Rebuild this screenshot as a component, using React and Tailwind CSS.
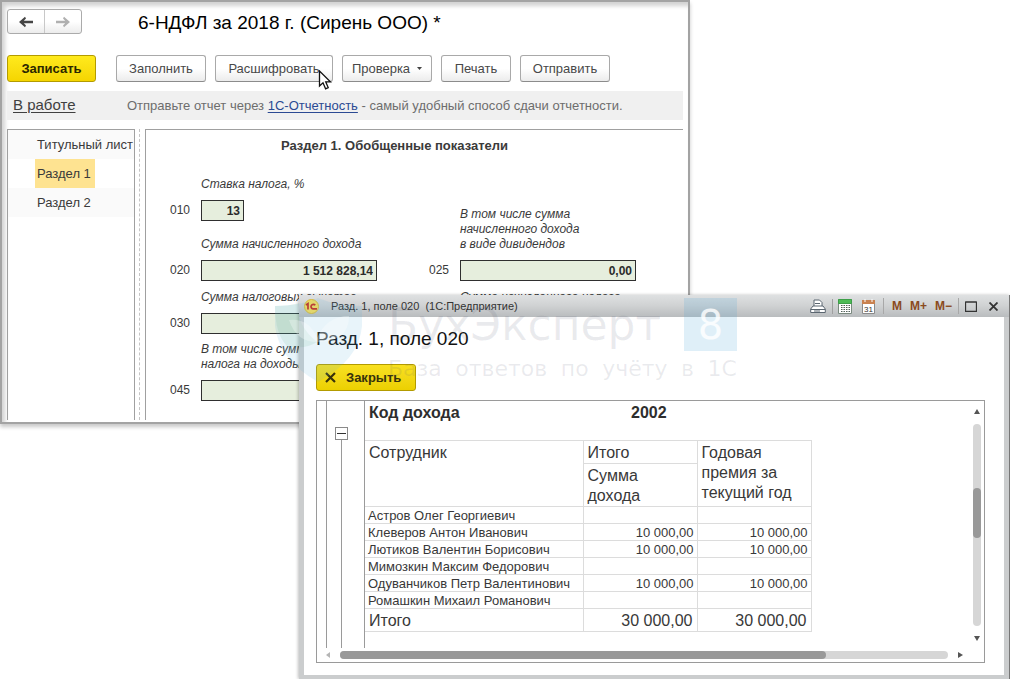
import React from "react";

const toolbarButton =
  "flex h-[27px] items-center justify-center rounded-[3px] border border-[#a9a9a9] border-b-[#8c8c8c] bg-linear-to-b from-white from-50% to-[#ececec] text-[13px] text-[#484848]";

function Field({ code, label, value, spacing, width = "w-44" }) {
  const id = "field-" + code;
  return (
    <div className={"grid grid-cols-[31px_176px] gap-y-2 " + spacing}>
      <label htmlFor={id} className="col-start-2 text-[12px] leading-[15px] text-[#3a3a3a] italic whitespace-pre">
        {label}
      </label>
      <span className="col-start-1 text-[12px] leading-[21px]">{code}</span>
      <input
        id={id}
        defaultValue={value}
        className={"h-[21px] border border-[#2f2f2f] bg-[#e6eedd] pr-[3px] text-right text-[12px] font-bold text-[#2b2b2b] outline-none " + width}
      />
    </div>
  );
}

function ReportWindow() {
  return (
    <section className="mr-80 border-2 border-[#a3a3a3] bg-white pb-0.5 pl-[5px] shadow-[0_3px_4px_rgba(0,0,0,0.22),inset_3px_4px_4px_rgba(0,0,0,0.18)]">
      <header className="flex items-center pt-[7px]">
        <div className="flex h-[25px] w-[75px] rounded-[3px] border border-[#ababab] bg-linear-to-b from-white from-50% to-[#ececec]">
          <button aria-label="Назад" className="flex flex-1 items-center justify-center border-r border-[#c8c8c8]">
            <svg width="14" height="12" viewBox="0 0 14 12" fill="#454545">
              <path d="M0 6L6 .8L7 2.6L4.8 4.8H14V7.2H4.8L7 9.4L6 11.2Z" />
            </svg>
          </button>
          <button aria-label="Вперед" className="flex flex-1 items-center justify-center">
            <svg width="14" height="12" viewBox="0 0 14 12" fill="#b0b0b0">
              <path d="M14 6L8 .8L7 2.6L9.2 4.8H0V7.2H9.2L7 9.4L8 11.2Z" />
            </svg>
          </button>
        </div>
        <h1 className="ml-14 pt-0.5 text-[19px] leading-[23px] text-black">6-НДФЛ за 2018 г. (Сирень ООО) *</h1>
      </header>

      <div className="mt-[21px] flex">
        <button className="mr-5 flex h-[27px] w-[89px] items-center justify-center rounded-[3px] border border-[#b39b00] bg-linear-to-b from-[#ffea1c] to-[#f5d500] text-[13px] font-bold text-[#2b2600]">
          Записать
        </button>
        <div className="flex gap-[9px]">
          <button className={toolbarButton + " w-[90px]"}>Заполнить</button>
          <button className={toolbarButton + " relative w-[118px]"}>
            Расшифровать
            <svg className="absolute top-[14px] right-0" width="14" height="21" viewBox="0 0 14 21">
              <path d="M1.5 1V16L5 12.8L7.6 18.8L10.2 17.6L7.7 11.8H12.4Z" fill="#fff" stroke="#111" strokeWidth="1.3" />
            </svg>
          </button>
          <button className={toolbarButton + " w-[90px] gap-[7px]"}>
            Проверка
            <svg width="5" height="3" viewBox="0 0 5 3" fill="#444">
              <path d="M0 0H5L2.5 3Z" />
            </svg>
          </button>
          <button className={toolbarButton + " w-[70px]"}>Печать</button>
          <button className={toolbarButton + " w-[90px]"}>Отправить</button>
        </div>
      </div>

      <div className="mt-[9px] mr-[5px] flex h-[29px] items-center bg-[#f0f0f0] pl-1.5">
        <a href="#status" className="w-[114px] text-[15px] text-[#404040] underline underline-offset-2">
          В работе
        </a>
        <p className="text-[13px] text-[#6d6d6d]">
          Отправьте отчет через{" "}
          <a href="#reporting" className="text-[#2b4a93] underline underline-offset-2">
            1С-Отчетность
          </a>{" "}
          - самый удобный способ сдачи отчетности.
        </p>
      </div>

      <div className="mt-[9px] mr-[5px] flex">
        <nav className="w-32 border border-b-0 border-[#a0a0a0] text-[13px] leading-[29px] text-[#3a3a3a]">
          <a href="#title" className="block bg-[#fafafa] pl-[29px] whitespace-nowrap">Титульный лист</a>
          <a href="#s1" className="block pl-[27px]">
            <span className="block w-[60px] bg-[#fee391] pl-0.5">Раздел 1</span>
          </a>
          <a href="#s2" className="block bg-[#fafafa] pl-[29px]">Раздел 2</a>
        </nav>
        <div className="w-[5px] border-r border-dashed border-[#c4c4c4]" />
        <div className="ml-[5px] flex-1 border-t border-l border-[#a0a0a0] pb-[19px] text-[#3a3a3a]">
          <h2 className="pt-2 pr-10 text-center text-[13px] leading-4 font-bold">Раздел 1. Обобщенные показатели</h2>
          <div className="mt-[23px] flex gap-[52px] pl-6">
            <div>
              <Field code="010" label="Ставка налога, %" value="13" width="w-[43px]" spacing="" />
              <Field code="020" label="Сумма начисленного дохода" value="1 512 828,14" spacing="mt-4" />
              <Field code="030" label="Сумма налоговых вычетов" value="" spacing="mt-[9px]" />
              <Field code="045" label={"В том числе сумма\nналога на доходы"} value="" spacing="mt-2" />
            </div>
            <div className="pt-[30px]">
              <Field code="025" label={"В том числе сумма\nначисленного дохода\nв виде дивидендов"} value="0,00" spacing="" />
              <p className="mt-[9px] pl-[31px] text-[12px] leading-[15px] italic">Сумма начисленного налога</p>
            </div>
          </div>
        </div>
      </div>
    </section>
  );
}

const employees = [
  ["Астров Олег Георгиевич", "", ""],
  ["Клеверов Антон Иванович", "10 000,00", "10 000,00"],
  ["Лютиков Валентин Борисович", "10 000,00", "10 000,00"],
  ["Мимозкин Максим Федорович", "", ""],
  ["Одуванчиков Петр Валентинович", "10 000,00", "10 000,00"],
  ["Ромашкин Михаил Романович", "", ""],
];

const cell = "border border-[#dcdcdc] ";

function IncomeTable() {
  return (
    <table className="w-[446px] table-fixed border-collapse text-left text-[#383838]">
      <colgroup>
        <col className="w-[218px]" />
        <col className="w-[114px]" />
        <col className="w-[114px]" />
      </colgroup>
      <thead className="align-top text-[16px] leading-5">
        <tr className="h-[39px] text-[#2e2e2e]">
          <th className="pt-0.5 pl-1 font-bold">Код дохода</th>
          <th className="pt-0.5 pl-12 font-bold">2002</th>
          <td />
        </tr>
        <tr className="h-[23px]">
          <th rowSpan={2} className={cell + "border-l-0 pt-0.5 pl-1 font-normal"}>Сотрудник</th>
          <th className={cell + "pt-0.5 pl-1 font-normal"}>Итого</th>
          <th rowSpan={2} className={cell + "pt-0.5 pl-1 font-normal"}>Годовая премия за текущий год</th>
        </tr>
        <tr className="h-[43px]">
          <th className={cell + "pt-0.5 pr-8 pl-1 font-normal"}>Сумма дохода</th>
        </tr>
      </thead>
      <tbody className="text-[13px] leading-[14px]">
        {employees.map(([name, sum, bonus]) => (
          <tr key={name} className="h-[17px]">
            <td className={cell + "border-l-0 pt-0.5 pl-[3px] whitespace-nowrap"}>{name}</td>
            <td className={cell + "pt-0.5 pr-[3px] text-right"}>{sum}</td>
            <td className={cell + "pt-0.5 pr-[3px] text-right"}>{bonus}</td>
          </tr>
        ))}
      </tbody>
      <tfoot className="text-[16px] leading-5">
        <tr className="h-[23px]">
          <td className={cell + "border-l-0 pt-0.5 pl-1"}>Итого</td>
          <td className={cell + "pt-0.5 pr-1 text-right"}>30 000,00</td>
          <td className={cell + "pt-0.5 pr-1 text-right"}>30 000,00</td>
        </tr>
      </tfoot>
    </table>
  );
}

function Watermark() {
  return (
    <div aria-hidden="true" className="pointer-events-none absolute top-[3px] -left-6 flex">
      <svg width="87" height="84" viewBox="0 0 87 84">
        <path d="M0 8Q24 8 43 0Q62 8 87 8V28Q84 62 43 84Q4 62 0 28Z" fill="#5fb0dc" fillOpacity="0.14" />
        <path d="M0 8Q14 8 24 5Q20 26 42 44Q30 52 12 48Q0 36 0 8Z" fill="#3f9f6c" fillOpacity="0.1" />
        <path d="M14 22Q34 20 42 40Q52 18 74 18Q74 42 46 44Q22 46 14 22Z" fill="#fff" fillOpacity="0.3" />
      </svg>
      <div className="ml-[26px] font-['DejaVu_Sans',sans-serif] text-[#555a70]/12">
        <div className="flex items-center">
          <span className="w-[296px] text-[44px] leading-[53px]">БухЭксперт</span>
          <span className="flex size-[53px] items-center justify-center bg-[#4fa6d8]/18 text-[40px] leading-none text-white/80">8</span>
        </div>
        <p className="mt-1 flex justify-between text-[22px] leading-7 whitespace-nowrap">
          <span>База</span> <span>ответов</span> <span>по</span> <span>учёту</span> <span>в</span> <span>1С</span>
        </p>
      </div>
    </div>
  );
}

function TitleBar() {
  return (
    <header className="flex h-[22px] items-center bg-linear-to-b from-[#dfe1e2] via-[#cfd1d2] to-[#b9bcbe] pr-[11px] pl-[5px] text-[11px] text-[#333]">
      <svg width="15" height="15" viewBox="0 0 15 15">
        <circle cx="7.5" cy="7.5" r="7" fill="#f8dc5a" stroke="#d8b93c" />
        <path d="M2 6L4 4.6V10.5M11.2 6.3A2.3 2.3 0 1 0 9 9.9H13" fill="none" stroke="#c92a1c" strokeWidth="1.7" />
      </svg>
      <span className="ml-3 flex-1 whitespace-pre">Разд. 1, поле 020  (1С:Предприятие)</span>
      <button aria-label="Печать" className="pr-1.5">
        <svg width="16" height="15" viewBox="0 0 16 15" fill="#fff" stroke="#5b6670">
          <path d="M4 7V1H9.5L12 3.5V7" />
          <path d="M3 7H13L15.3 10V13.5H.7V10Z" />
          <path d="M1 10.5H15M5 4.5H10M4 12H10" />
        </svg>
      </button>
      <button aria-label="Калькулятор" className="border-l border-[#a0a0a0] px-[5px]">
        <svg width="14" height="15" viewBox="0 0 14 15">
          <path d="M.5.5H13.5V14.5H.5Z" fill="#fff" stroke="#7b8a80" />
          <path d="M.5.5H13.5V4.5H.5Z" fill="#4dbb55" stroke="#3d9f48" />
          <path d="M3 6.5H12M3 8.5H12M3 10.5H12M3 12.5H12" stroke="#526058" strokeDasharray="1.5 1" />
        </svg>
      </button>
      <button aria-label="Календарь" className="pr-2 pl-[5px]">
        <svg width="13" height="15" viewBox="0 0 13 15">
          <path d="M.5 1.5H12.5V14.5H.5Z" fill="#fff" stroke="#8a8a8a" />
          <path d="M0 1H13V5H0Z" fill="#c98250" />
          <path d="M3 0V3M10 0V3" stroke="#fff" />
          <text x="6.5" y="12.5" textAnchor="middle" fontSize="8" fill="#333">31</text>
        </svg>
      </button>
      <div className="flex gap-2 border-x border-[#a8a8a8] pr-1.5 pl-2 text-[12px] leading-4 font-bold text-[#8a4a20]">
        <button>M</button>
        <button>M+</button>
        <button>M−</button>
      </div>
      <button aria-label="Развернуть" className="pl-1.5">
        <svg width="12" height="11" viewBox="0 0 12 11" fill="none" stroke="#333">
          <path d="M.5 1H11.5M.5 .5V10.5H11.5V.5" strokeWidth="1.3" />
        </svg>
      </button>
      <button aria-label="Закрыть окно" className="pl-3">
        <svg width="9" height="9" viewBox="0 0 9 9" stroke="#333" strokeWidth="1.8">
          <path d="M.5.5L8.5 8.5M8.5.5L.5 8.5" />
        </svg>
      </button>
    </header>
  );
}

function DetailWindow() {
  return (
    <section className="relative -mt-[129px] ml-[299px] border-r border-[#777] bg-[#cbcdce] pb-1 shadow-[-1px_0_3px_rgba(0,0,0,0.25)]">
      <TitleBar />
      <div className="mr-[5px] ml-[5px] bg-white px-3 pt-2 pb-3">
        <h2 className="text-[19px] leading-7 text-[#111]">Разд. 1, поле 020</h2>
        <button className="mt-[11px] flex h-[27px] w-[100px] items-center gap-2.5 rounded-[3px] border border-[#b39b00] bg-linear-to-b from-[#f8e020] to-[#ecd000] pl-2 text-[13px] font-bold text-[#37320c]">
          <svg width="11" height="11" viewBox="0 0 11 11" stroke="#37320c" strokeWidth="2.2">
            <path d="M1 1L10 10M10 1L1 10" />
          </svg>
          Закрыть
        </button>
        <div className="mt-[9px] mr-[7px] border border-[#9a9a9a] pr-[3px] pb-[3px]">
          <div className="flex">
            <div className="ml-[9px] flex w-[39px] flex-col items-center border-x border-[#9a9a9a] pt-[26px] pr-2">
              <button aria-label="Свернуть группу" className="flex size-[13px] items-center justify-center border border-[#8a8a8a]">
                <svg width="9" height="1" viewBox="0 0 9 1" fill="#333">
                  <path d="M0 0H9V1H0Z" />
                </svg>
              </button>
              <div className="w-px flex-1 bg-[#9a9a9a]" />
            </div>
            <div className="flex-1 pb-4">
              <IncomeTable />
            </div>
            <div className="flex w-2 flex-col items-center justify-between pt-2 pb-[7px]">
              <svg width="6" height="5" viewBox="0 0 6 5" fill="#555"><path d="M0 5L3 0L6 5Z" /></svg>
              <div className="mt-2.5 mb-2.5 w-2 flex-1 rounded-full bg-[#d6d6d6] pt-16">
                <div className="h-[50px] rounded-full bg-[#999]" />
              </div>
              <svg width="6" height="5" viewBox="0 0 6 5" fill="#555"><path d="M0 0L3 5L6 0Z" /></svg>
            </div>
          </div>
          <div className="mt-[3px] flex items-center pr-[18px] pl-[9px]">
            <svg width="4" height="6" viewBox="0 0 4 6" fill="#b5b5b5"><path d="M4 0L0 3L4 6Z" /></svg>
            <div className="mr-2.5 ml-2.5 h-2 flex-1 rounded-full bg-[#d6d6d6]">
              <div className="h-2 w-4/5 rounded-full bg-[#999]" />
            </div>
            <svg width="5" height="6" viewBox="0 0 5 6" fill="#555"><path d="M0 0L5 3L0 6Z" /></svg>
          </div>
        </div>
      </div>
      <Watermark />
    </section>
  );
}

export default function App() {
  return (
    <main className="min-h-screen overflow-hidden bg-white font-['Liberation_Sans',Arial,sans-serif]">
      <ReportWindow />
      <DetailWindow />
    </main>
  );
}
